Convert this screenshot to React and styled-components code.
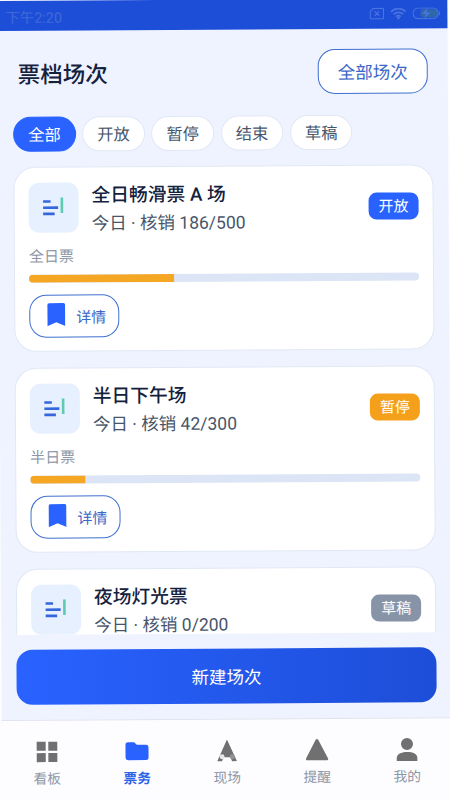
import React, { useState } from "react";
import styled, { createGlobalStyle } from "styled-components";

const GlobalStyle = createGlobalStyle`
  * {
    box-sizing: border-box;
  }

  body {
    margin: 0;
    overflow: hidden;
    background-color: #fdfdff;
    font-family: Roboto, "Noto Sans CJK SC", sans-serif;
  }

  button {
    font-family: inherit;
    padding: 0;
    margin: 0;
  }
`;

const Screen = styled.div`
  width: 450px;
  height: 804px;
  display: flex;
  flex-direction: column;
  background-color: #eff3ff;
  transform: translate(-2.7px, 1px) rotate(-0.36deg);
  transform-origin: 0 0;
`;

const StatusBar = styled.div`
  height: 30px;
  flex: none;
  display: flex;
  align-items: center;
  justify-content: space-between;
  padding: 0 7px 0 8px;
  background-color: #1d4ed8;
  color: #4169d9;
  font-size: 14.4px;
`;

const StatusIcons = styled.div`
  display: flex;
  align-items: center;
  gap: 6px;
`;

const Header = styled.header`
  flex: none;
  display: flex;
  align-items: center;
  justify-content: space-between;
  padding: 20px 20px 0;
`;

const Title = styled.h1`
  margin: 0;
  padding-top: 2px;
  font-size: 22.5px;
  font-weight: 500;
  line-height: 30px;
  color: #14213d;
`;

const AllButton = styled.button`
  width: 110px;
  height: 45px;
  border: 1.5px solid #3f6fd0;
  border-radius: 17px;
  background-color: #ffffff;
  color: #3b67c8;
  font-size: 17.5px;
`;

const Tabs = styled.div`
  flex: none;
  display: flex;
  gap: 6.7px;
  padding: 20.5px 15px 0;
`;

const Tab = styled.button`
  width: 62.5px;
  height: 35.5px;
  border: 1px solid ${(props) => (props.$active ? "#2962ff" : "#e1e7f5")};
  border-radius: 18px;
  background-color: ${(props) => (props.$active ? "#2962ff" : "#ffffff")};
  color: ${(props) => (props.$active ? "#ffffff" : "#475569")};
  font-size: 16.25px;
`;

const List = styled.div`
  flex: none;
  height: 483px;
  overflow: hidden;
  padding: 15px 15px 0;
`;

const Card = styled.section`
  height: 184.5px;
  margin-bottom: 16.5px;
  padding: 15px 14px 0;
  border: 1px solid #e1e7f5;
  border-radius: 22px;
  background-color: #ffffff;
`;

const CardHead = styled.div`
  display: flex;
  align-items: center;
  height: 50px;
`;

const IconBox = styled.div`
  width: 50px;
  height: 50px;
  flex: none;
  border-radius: 10px;
  background-color: #e6f0ff;
`;

const CardText = styled.div`
  flex: 1;
  margin-left: 13px;
  padding-top: 5px;
`;

const CardTitle = styled.div`
  font-size: 18.75px;
  font-weight: 500;
  line-height: 27px;
  color: #14213d;
`;

const CardSub = styled.div`
  font-size: 17.5px;
  line-height: 28px;
  color: #475569;
`;

const Badge = styled.div`
  width: 50px;
  height: 27px;
  line-height: 28px;
  border-radius: 8px;
  background-color: ${(props) => props.$color};
  color: #ffffff;
  font-size: 15px;
  text-align: center;
`;

const Kind = styled.div`
  margin-top: 13px;
  font-size: 15px;
  line-height: 22px;
  color: #8d96a6;
`;

const Track = styled.div`
  height: 7.5px;
  margin-top: 7px;
  border-radius: 4px;
  overflow: hidden;
  background-color: #dce5f5;
`;

const Fill = styled.div`
  height: 100%;
  background-color: #f5a623;
`;

const DetailButton = styled.button`
  display: flex;
  align-items: center;
  width: 90px;
  height: 42.5px;
  margin-top: 12.5px;
  padding-left: 17px;
  border: 1.5px solid #3f6fd0;
  border-radius: 17px;
  background-color: #ffffff;
  color: #3b67c8;
  font-size: 15px;

  svg {
    margin: -3px 11px 0 0;
  }
`;

const CreateButton = styled.button`
  flex: none;
  height: 55px;
  margin: 15px 15px;
  border: none;
  border-radius: 16px;
  background: linear-gradient(90deg, #2962ff, #1d4ed8);
  color: #ffffff;
  font-size: 17.5px;
`;

const Nav = styled.nav`
  flex: 1;
  display: flex;
  border-top: 1.5px solid #dfe3ee;
  background-color: #fdfdff;
`;

const NavItem = styled.div`
  flex: 1;
  display: flex;
  flex-direction: column;
  align-items: center;
  padding-top: 15.5px;
  font-size: 13.75px;
  line-height: 20px;
  font-weight: ${(props) => (props.$active ? 700 : 400)};
  color: ${(props) => (props.$active ? "#2b62e8" : "#8d96a6")};

  svg {
    margin-bottom: 2.5px;
    color: ${(props) => (props.$active ? "#2962ff" : "#707070")};
  }
`;

function TicketIcon() {
  return (
    <svg width="50" height="50" viewBox="0 0 50 50">
      <path d="M14.5 18.8h7.5M14.5 25h15M14.5 31.2h11.5" stroke="#3566db" strokeWidth="2.6" />
      <path d="M33.3 15v15.5" stroke="#5ccbb0" strokeWidth="2.6" />
    </svg>
  );
}

function BookmarkIcon() {
  return (
    <svg width="18" height="24" viewBox="0 0 18 24">
      <path d="M2 0.5h14a2 2 0 0 1 2 2V23.5L9 19.7L0 23.5V2.5a2 2 0 0 1 2-2z" fill="#2962ff" />
    </svg>
  );
}

function NavIcon({ name }) {
  return (
    <svg width="30" height="30" viewBox="0 0 30 30" fill="currentColor">
      {name === "board" && (
        <path d="M4.7 5h9v9h-9zM16.3 5h9v9h-9zM4.7 16.4h9v9h-9zM16.3 16.4h9v9h-9z" />
      )}
      {name === "ticket" && (
        <path d="M6 6h6.2l2.6 2.6H24a2.5 2.5 0 0 1 2.5 2.5V21.5a2.5 2.5 0 0 1-2.5 2.5H6a2.5 2.5 0 0 1-2.5-2.5V8.5A2.5 2.5 0 0 1 6 6z" />
      )}
      {name === "scene" && (
        <>
          <path d="M15 4L24.8 25.6H20L18.4 21.6H11.6L10 25.6H5.2z" />
          <circle cx="10" cy="21.2" r="2.5" fill="#e6e6e8" />
          <circle cx="20.2" cy="21.2" r="2.5" fill="#929292" />
        </>
      )}
      {name === "alert" && (
        <path d="M13.7 4.8a1.5 1.5 0 0 1 2.6 0L26 23.5a1.2 1.2 0 0 1-1 1.8H5a1.2 1.2 0 0 1-1-1.8z" />
      )}
      {name === "me" && (
        <>
          <circle cx="15" cy="9.5" r="6" />
          <path d="M4.7 26.5V23.5C4.7 19.5 9 17.5 15 17.5S25.3 19.5 25.3 23.5V26.5z" />
        </>
      )}
    </svg>
  );
}

const tabs = ["全部", "开放", "暂停", "结束", "草稿"];

const sessions = [
  { title: "全日畅滑票 A 场", used: 186, total: 500, kind: "全日票", status: "开放", color: "#2962ff" },
  { title: "半日下午场", used: 42, total: 300, kind: "半日票", status: "暂停", color: "#f5a01a" },
  { title: "夜场灯光票", used: 0, total: 200, status: "草稿", color: "#8794a8" },
];

const navItems = [
  { name: "board", label: "看板" },
  { name: "ticket", label: "票务" },
  { name: "scene", label: "现场" },
  { name: "alert", label: "提醒" },
  { name: "me", label: "我的" },
];

export default function App() {
  const [tab, setTab] = useState("全部");

  return (
    <>
      <GlobalStyle />
      <Screen>
        <StatusBar>
          <span>下午2:20</span>
          <StatusIcons>
            <svg width="15" height="12" viewBox="0 0 15 12" fill="none" stroke="#4a73df" strokeWidth="1.2">
              <path d="M4 .8h9.2a1 1 0 0 1 1 1v8.4a1 1 0 0 1-1 1H1.800a1 1 0 0 1-1-1V4zM5.300 3.800l4.400 4.400M9.700 3.800L5.300 8.200" />
            </svg>
            <svg width="16" height="12" viewBox="0 0 16 12" fill="none" stroke="#4a73df" strokeWidth="1.7">
              <path d="M.7 4.3C4.7.2 11.3.2 15.3 4.3M3.2 6.8c2.7-2.6 6.900-2.600 9.600 0M5.600 9.100c1.400-1.200 3.400-1.200 4.800 0" />
              <circle cx="8" cy="10.8" r=".6" />
            </svg>
            <svg width="28" height="12" viewBox="0 0 28 12">
              <rect x="8" y="2" width="17" height="8" rx="3" fill="#2f68a8" />
              <rect x=".7" y=".7" width="25" height="10.6" rx="5" fill="none" stroke="#4a73df" strokeWidth="1.1" />
              <path d="M15.5 0L9.500 6.700h4L11.800 12l6.200-7h-4z" fill="#4a73df" />
              <path d="M27 4v4" stroke="#4a73df" />
            </svg>
          </StatusIcons>
        </StatusBar>
        <Header>
          <Title>票档场次</Title>
          <AllButton>全部场次</AllButton>
        </Header>
        <Tabs>
          {tabs.map((name) => (
            <Tab key={name} $active={name === tab} onClick={() => setTab(name)}>
              {name}
            </Tab>
          ))}
        </Tabs>
        <List>
          {sessions.map((item) => (
            <Card key={item.title}>
              <CardHead>
                <IconBox>
                  <TicketIcon />
                </IconBox>
                <CardText>
                  <CardTitle>{item.title}</CardTitle>
                  <CardSub>
                    今日 · 核销 {item.used}/{item.total}
                  </CardSub>
                </CardText>
                <Badge $color={item.color}>{item.status}</Badge>
              </CardHead>
              {item.kind && (
                <>
                  <Kind>{item.kind}</Kind>
                  <Track>
                    <Fill style={{ width: `${(item.used / item.total) * 100}%` }} />
                  </Track>
                  <DetailButton>
                    <BookmarkIcon />
                    详情
                  </DetailButton>
                </>
              )}
            </Card>
          ))}
        </List>
        <CreateButton>新建场次</CreateButton>
        <Nav>
          {navItems.map((item) => (
            <NavItem key={item.name} $active={item.name === "ticket"}>
              <NavIcon name={item.name} />
              {item.label}
            </NavItem>
          ))}
        </Nav>
      </Screen>
    </>
  );
}
